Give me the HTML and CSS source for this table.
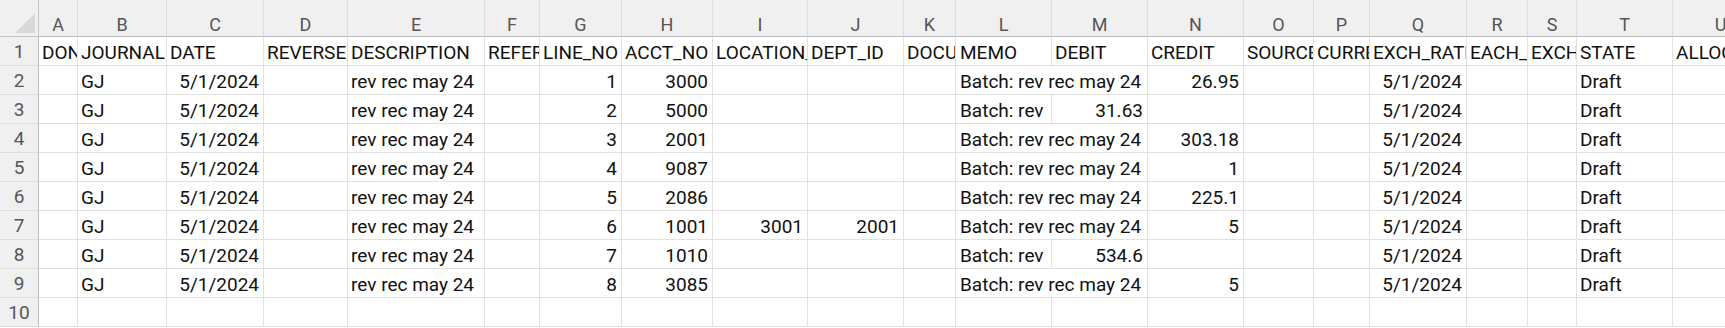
FILE: index.html
```html
<!DOCTYPE html>
<html>
<head>
<meta charset="utf-8">
<link rel="stylesheet" href="styles.css">
</head>
<body>
<div class="sheet">
  <div class="corner"><svg class="tri" width="39" height="37" viewBox="0 0 39 37"><polygon points="35,13 35,33 15,33" fill="#d9d9d9"/></svg></div>
  <div class="ch">A</div><div class="ch">B</div><div class="ch">C</div><div class="ch">D</div><div class="ch">E</div><div class="ch">F</div><div class="ch">G</div><div class="ch">H</div><div class="ch">I</div><div class="ch">J</div><div class="ch">K</div><div class="ch">L</div><div class="ch">M</div><div class="ch">N</div><div class="ch">O</div><div class="ch">P</div><div class="ch">Q</div><div class="ch">R</div><div class="ch">S</div><div class="ch">T</div><div class="ch">U</div>

  <div class="rh">1</div>
  <div class="c">DONOTIMPORT</div><div class="c">JOURNAL</div><div class="c">DATE</div><div class="c">REVERSEDATE</div><div class="c">DESCRIPTION</div><div class="c">REFERENCE_NO</div><div class="c">LINE_NO</div><div class="c">ACCT_NO</div><div class="c">LOCATION_ID</div><div class="c">DEPT_ID</div><div class="c">DOCUMENT</div><div class="c m">MEMO</div><div class="c">DEBIT</div><div class="c">CREDIT</div><div class="c">SOURCEENTITY</div><div class="c">CURRENCY</div><div class="c">EXCH_RATE_DATE</div><div class="c">EACH_RATE_TYPE</div><div class="c">EXCHANGE_RATE</div><div class="c">STATE</div><div class="c">ALLOCATION</div>

  <div class="rh">2</div>
  <div class="c"></div><div class="c">GJ</div><div class="c n">5/1/2024</div><div class="c"></div><div class="c">rev rec may 24</div><div class="c"></div><div class="c n">1</div><div class="c n">3000</div><div class="c"></div><div class="c"></div><div class="c"></div><div class="c m span2">Batch: rev rec may 24</div><div class="c n">26.95</div><div class="c"></div><div class="c"></div><div class="c n">5/1/2024</div><div class="c"></div><div class="c"></div><div class="c">Draft</div><div class="c"></div>

  <div class="rh">3</div>
  <div class="c"></div><div class="c">GJ</div><div class="c n">5/1/2024</div><div class="c"></div><div class="c">rev rec may 24</div><div class="c"></div><div class="c n">2</div><div class="c n">5000</div><div class="c"></div><div class="c"></div><div class="c"></div><div class="c m"><span class="clip">Batch: rev rec may 24</span></div><div class="c n">31.63</div><div class="c"></div><div class="c"></div><div class="c"></div><div class="c n">5/1/2024</div><div class="c"></div><div class="c"></div><div class="c">Draft</div><div class="c"></div>

  <div class="rh">4</div>
  <div class="c"></div><div class="c">GJ</div><div class="c n">5/1/2024</div><div class="c"></div><div class="c">rev rec may 24</div><div class="c"></div><div class="c n">3</div><div class="c n">2001</div><div class="c"></div><div class="c"></div><div class="c"></div><div class="c m span2">Batch: rev rec may 24</div><div class="c n">303.18</div><div class="c"></div><div class="c"></div><div class="c n">5/1/2024</div><div class="c"></div><div class="c"></div><div class="c">Draft</div><div class="c"></div>

  <div class="rh">5</div>
  <div class="c"></div><div class="c">GJ</div><div class="c n">5/1/2024</div><div class="c"></div><div class="c">rev rec may 24</div><div class="c"></div><div class="c n">4</div><div class="c n">9087</div><div class="c"></div><div class="c"></div><div class="c"></div><div class="c m span2">Batch: rev rec may 24</div><div class="c n">1</div><div class="c"></div><div class="c"></div><div class="c n">5/1/2024</div><div class="c"></div><div class="c"></div><div class="c">Draft</div><div class="c"></div>

  <div class="rh">6</div>
  <div class="c"></div><div class="c">GJ</div><div class="c n">5/1/2024</div><div class="c"></div><div class="c">rev rec may 24</div><div class="c"></div><div class="c n">5</div><div class="c n">2086</div><div class="c"></div><div class="c"></div><div class="c"></div><div class="c m span2">Batch: rev rec may 24</div><div class="c n">225.1</div><div class="c"></div><div class="c"></div><div class="c n">5/1/2024</div><div class="c"></div><div class="c"></div><div class="c">Draft</div><div class="c"></div>

  <div class="rh">7</div>
  <div class="c"></div><div class="c">GJ</div><div class="c n">5/1/2024</div><div class="c"></div><div class="c">rev rec may 24</div><div class="c"></div><div class="c n">6</div><div class="c n">1001</div><div class="c n">3001</div><div class="c n">2001</div><div class="c"></div><div class="c m span2">Batch: rev rec may 24</div><div class="c n">5</div><div class="c"></div><div class="c"></div><div class="c n">5/1/2024</div><div class="c"></div><div class="c"></div><div class="c">Draft</div><div class="c"></div>

  <div class="rh">8</div>
  <div class="c"></div><div class="c">GJ</div><div class="c n">5/1/2024</div><div class="c"></div><div class="c">rev rec may 24</div><div class="c"></div><div class="c n">7</div><div class="c n">1010</div><div class="c"></div><div class="c"></div><div class="c"></div><div class="c m"><span class="clip">Batch: rev rec may 24</span></div><div class="c n">534.6</div><div class="c"></div><div class="c"></div><div class="c"></div><div class="c n">5/1/2024</div><div class="c"></div><div class="c"></div><div class="c">Draft</div><div class="c"></div>

  <div class="rh">9</div>
  <div class="c"></div><div class="c">GJ</div><div class="c n">5/1/2024</div><div class="c"></div><div class="c">rev rec may 24</div><div class="c"></div><div class="c n">8</div><div class="c n">3085</div><div class="c"></div><div class="c"></div><div class="c"></div><div class="c m span2">Batch: rev rec may 24</div><div class="c n">5</div><div class="c"></div><div class="c"></div><div class="c n">5/1/2024</div><div class="c"></div><div class="c"></div><div class="c">Draft</div><div class="c"></div>

  <div class="rh">10</div>
  <div class="c"></div><div class="c"></div><div class="c"></div><div class="c"></div><div class="c"></div><div class="c"></div><div class="c"></div><div class="c"></div><div class="c"></div><div class="c"></div><div class="c"></div><div class="c"></div><div class="c"></div><div class="c"></div><div class="c"></div><div class="c"></div><div class="c"></div><div class="c"></div><div class="c"></div><div class="c"></div><div class="c"></div>
</div>
</body>
</html>
```

FILE: styles.css
```css
html, body {
  margin: 0;
  padding: 0;
  background: #ffffff;
}
body {
  width: 1725px;
  height: 328px;
  overflow: hidden;
  font-family: Roboto, "Liberation Sans", sans-serif;
}
.sheet {
  display: grid;
  grid-template-columns: 39px 39px 89px 97px 84px 137px 55px 82px 91px 95px 96px 52px 96px 96px 96px 70px 56px 97px 61px 49px 96px 96px;
  grid-template-rows: 37px repeat(10, 29px);
  width: 1769px;
}
.sheet > div {
  box-sizing: border-box;
  white-space: nowrap;
  overflow: hidden;
}
.corner {
  background: #f0f0f0;
  border-right: 1px solid #c4c4c4;
  border-bottom: 1px solid #c4c4c4;
}
.tri {
  display: block;
}
.ch {
  background: #f0f0f0;
  border-right: 1px solid #dedede;
  border-bottom: 1px solid #bdbdbd;
  color: #565656;
  font-size: 18px;
  line-height: 22px;
  padding-top: 14px;
  text-align: center;
}
.rh {
  background: #f0f0f0;
  border-right: 1px solid #bdbdbd;
  border-bottom: 1px solid #dedede;
  color: #565656;
  font-size: 19px;
  line-height: 27px;
  padding-top: 1px;
  text-align: center;
}
.c {
  border-right: 1px solid #e1e1e1;
  border-bottom: 1px solid #e1e1e1;
  color: #111111;
  font-size: 19px;
  line-height: 27px;
  padding: 2px 4px 0 3px;
  text-align: left;
}
.c.n {
  text-align: right;
}
.c.m {
  padding-left: 4px;
}
.c.span2 {
  grid-column: span 2;
}
.clip {
  display: block;
  width: 87px;
  overflow: hidden;
}
```
